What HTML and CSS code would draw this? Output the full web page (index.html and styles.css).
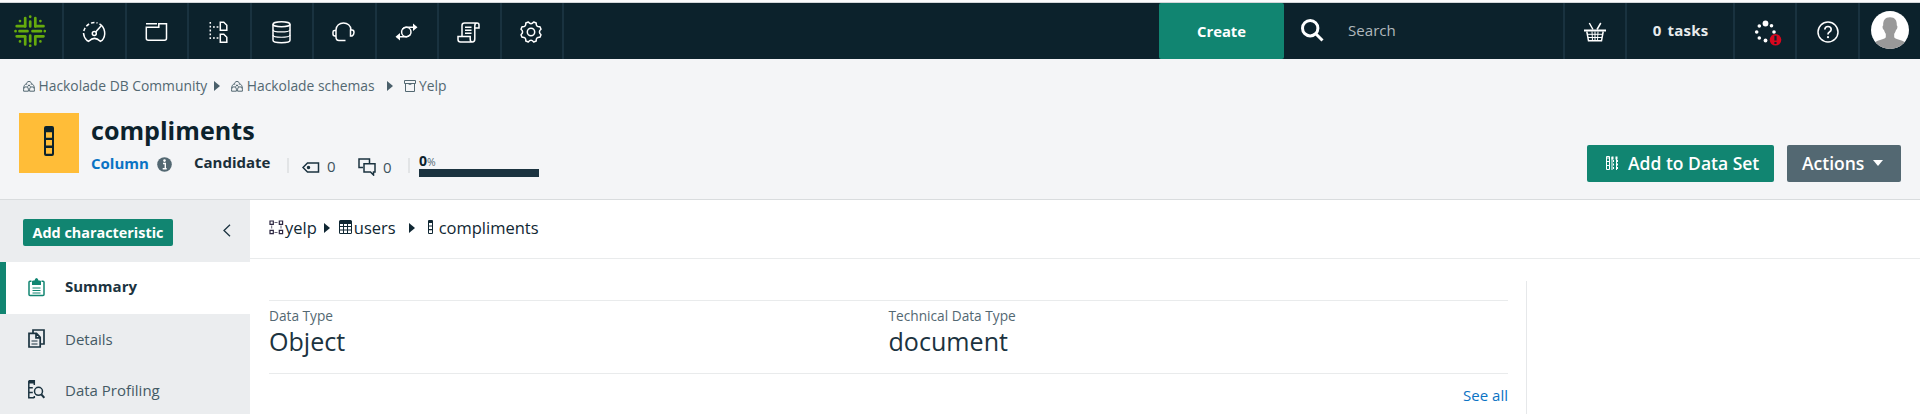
FILE: index.html
```html
<!DOCTYPE html>
<html lang="en">
<head>
<meta charset="utf-8">
<title>compliments</title>
<link rel="stylesheet" href="styles.css">
</head>
<body>
<svg width="0" height="0" class="defs">
  <defs>
    <symbol id="community" viewBox="0 0 12 12"><g fill="none" stroke="currentColor"><path d="M3.800 4.800A2.400 2.400 0 1 1 8.200 4.800M3.500 3.300Q.5 5 .5 8.500M8.500 3.300Q11.500 5 11.500 8.500"/><path d="M.6 9.200a2.400 2.400 0 0 1 4.800 0v2H.6zM6.600 9.200a2.400 2.400 0 0 1 4.800 0v2H6.600zM4.500 6.800L6 4.800l1.500 2"/></g></symbol>
    <symbol id="column" viewBox="0 0 10 30"><path d="M2 0h6a2 2 0 0 1 2 2v26a2 2 0 0 1-2 2H2a2 2 0 0 1-2-2V2a2 2 0 0 1 2-2zM2 6.300v5.500h6V6.300zM2 14v5.500h6V14zM2 22v5.700h6V22z" fill="currentColor" fill-rule="evenodd"/></symbol>
  </defs>
</svg>

<header class="topbar">
  <a class="cell logo">
    <svg width="32" height="32" viewBox="0 0 32 32" fill="none" stroke="#65ab0d" stroke-width="2.700" stroke-linecap="round">
      <path d="M11.200 3v5M16.200 6.500v5M21.300 3v5M11.200 8v3.500M21.300 8v3.500M11.200 21.500v8M16.200 20.500v6M21.300 21.500v8"/>
      <path d="M2.700 11.200H11M21.500 11.200h8M5.500 16.200h8M18.500 16.200h8.500M2.700 21.300H11M21.500 21.300h8"/>
      <path d="M16.200 1.500v.3M16.200 30.500v.3M1.500 16.200h.1M30.800 16.200h.1M6 6v.1M26.400 6v.1M6 26.400v.1M26.400 26.400v.1"/>
    </svg>
  </a>
  <a class="cell gauge"><svg width="25" height="22" viewBox="0 0 25 22" fill="none" stroke="#fff" stroke-width="1.500">
    <path d="M17.500 2.900A11 11 0 0 1 20 19.500L18.300 20.300Q12.500 14.500 6.700 20.300L5 19.500A11 11 0 0 1 1.500 12"/><path d="M1.800 10A11 11 0 0 1 15.500 2" stroke-dasharray="3.500 2"/><circle cx="12.300" cy="12.500" r="2"/><path d="M13.700 11L19 5"/></svg></a>
  <a class="cell"><svg width="23" height="20" viewBox="0 0 23 20" fill="none" stroke="#fff" stroke-width="1.500">
    <path d="M1 1.800h11M1.300 5.200h12.500V1.800h7.700v14.500a2 2 0 0 1-2 2H3.300a2 2 0 0 1-2-2z"/></svg></a>
  <a class="cell"><svg width="19" height="23" viewBox="0 0 19 23" fill="none" stroke="#fff" stroke-width="1.500">
    <path d="M1.300 1v17" stroke-dasharray="1.800 2"/><path d="M4 6h6M4 17h6" stroke-dasharray="1.800 1.800"/><path d="M11.300 1.300h3.500l3 3v5h-6.500zM11.300 13.300h3.500l3 3v5h-6.500z"/></svg></a>
  <a class="cell"><svg width="19" height="23" viewBox="0 0 19 23" fill="none" stroke="#fff" stroke-width="1.500">
    <ellipse cx="9.500" cy="3.300" rx="8.500" ry="2.500"/><path d="M1 3.300v16c0 3.300 17 3.300 17 0v-16"/><path d="M1 8.700c0 3 17 3 17 0M1 14c0 3 17 3 17 0" stroke-width="1.200"/></svg></a>
  <a class="cell"><svg width="23" height="20" viewBox="0 0 23 20" fill="none" stroke="#fff" stroke-width="1.500">
    <path d="M4 8C4 -1.300 19 -1.300 19 8M4 7.500v7.500q0 3.500 3 3.500h6.500M4 8.500H2.500Q1 8.500 1 10v2q0 2 2 2h1M18.500 8h1.500q2 0 2 2.500t-2 3.500h-1.500z"/></svg></a>
  <a class="cell"><svg width="23" height="18" viewBox="0 0 23 18" fill="none" stroke="#fff" stroke-width="1.500">
    <circle cx="11.300" cy="9" r="4.700"/><path d="M7.500 6.200Q9 4.300 11 4.300H18M15.200 11.800Q13.500 13.700 11.500 13.700H5"/><path d="M18 .5l4.500 3.800L18 8zM5 10L.5 13.700 5 17.500z" fill="#fff" stroke="none"/></svg></a>
  <a class="cell"><svg width="23" height="21" viewBox="0 0 23 21" fill="none" stroke="#fff" stroke-width="1.500">
    <path d="M5 14V3.500Q5 1 7.500 1h12.500Q22 1 22 3v3h-4M20 1Q17.800 1 17.800 4v13q0 3-2.500 3H3.500Q1 20 1 17.500v-3h12.200V17q0 3 2 3M8 5.200h6.500M8 8.200h6.500M8 11.200h6.500"/></svg></a>
  <a class="cell"><svg width="22" height="22" viewBox="0 0 22 22" fill="none" stroke="#fff" stroke-width="1.500" stroke-linejoin="round">
    <circle cx="11" cy="11" r="3.700"/><path d="M8.300 1Q11 4.500 13.700 1L16.200 2Q15.800 6.200 20 5.800L21 8.300Q17.800 11 21 13.700L20 16.200Q15.800 15.800 16.200 20L13.700 21Q11 17.500 8.300 21L5.800 20Q6.200 15.800 2 16.200L1 13.700Q4.200 11 1 8.300L2 5.800Q6.200 6.200 5.800 2z"/></svg></a>
  <div class="spring"></div>
  <button class="create">Create</button>
  <div class="search"><svg width="23" height="23" viewBox="0 0 23 23" fill="none" stroke="#fff" stroke-width="3"><circle cx="9.200" cy="9.200" r="7.700"/><path d="M15 15l6.500 6.500"/></svg><span>Search</span></div>
  <a class="cell basket"><svg width="22" height="20" viewBox="0 0 22 20" fill="none" stroke="#fff" stroke-width="1.500"><path d="M0 8.500h22" stroke-width="2"/><path d="M5.300 1L9 7.500M16.800 1L13 7.500M2.800 9.500L4.500 18.800h13L19.200 9.500"/><path d="M8 9.500l.5 9M11 9.500v9M14 9.500l-.5 9M3.500 12.300h15M4 15.500h14" stroke-width="1"/></svg></a>
  <a class="cell tasks">0 tasks</a>
  <a class="cell spinner"><svg width="28" height="26" viewBox="0 0 28 26"><g fill="#fff"><circle cx="11.500" cy="3.500" r="2.900"/><circle cx="17.500" cy="5.800" r="1.800"/><circle cx="20" cy="12" r="1.800"/><circle cx="11.500" cy="20.500" r="1.900"/><circle cx="5.300" cy="18" r="1.800"/><circle cx="2.700" cy="12" r="1.800"/><circle cx="5.300" cy="6" r="1.800"/></g><circle cx="21.500" cy="19.800" r="5.800" fill="#d9071e"/><path d="M21.500 15.800v4.800M21.500 22v2" stroke="#0c222c" stroke-width="2.200"/></svg></a>
  <a class="cell help"><svg width="22" height="22" viewBox="0 0 22 22" fill="none" stroke="#fff" stroke-width="1.500"><circle cx="11" cy="11" r="10"/><path d="M7.800 8.500Q8 5.500 11 5.500t3.200 2.800Q14.200 10 12.500 11T11 13.500" stroke-width="1.700"/><circle cx="11" cy="16.200" r="1.100" fill="#fff" stroke="none"/></svg></a>
  <svg class="avatar" width="38" height="38" viewBox="0 0 38 38"><clipPath id="round"><circle cx="19" cy="19" r="19"/></clipPath><circle cx="19" cy="19" r="19" fill="#fff"/><path clip-path="url(#round)" d="M19 6.300c5 0 7 3 6.800 8.200 1 0 .8 3.500-.8 4.500-.5 2-1.200 3-1.800 3.800v3.500C25 29 31 28.500 34 31.500V38H4v-6.500c3-3 9-2.500 10.800-5.200v-3.500c-.6-.8-1.300-1.800-1.800-3.800-1.600-1-1.800-4.500-.8-4.500C12 9.300 14 6.300 19 6.300z" fill="#999"/></svg>
</header>

<section class="asset">
  <nav class="crumbs">
    <svg width="12" height="12"><use href="#community"/></svg><span>Hackolade DB Community</span>
    <i class="arrow"></i>
    <svg width="12" height="12"><use href="#community"/></svg><span>Hackolade schemas</span>
    <i class="arrow wide"></i>
    <svg width="12" height="12" viewBox="0 0 12 12" fill="none" stroke="currentColor"><path d="M.5.500h11v3H.5zM1.500 3.500v8h9v-8M4 3.500q2 2 4 0"/></svg><span>Yelp</span>
  </nav>
  <div class="asset-row">
    <div class="tile"><svg width="10" height="30"><use href="#column"/></svg></div>
    <div class="info">
      <h1>compliments</h1>
      <div class="meta">
        <a class="type">Column</a>
        <svg class="about" width="15" height="15" viewBox="0 0 15 15"><circle cx="7.500" cy="7.500" r="7.300" fill="#536872"/><path d="M6 6.500h2.300v5M5.700 11.700h4" stroke="#fff" stroke-width="1.400" fill="none"/><circle cx="7.500" cy="3.600" r="1.300" fill="#fff"/></svg>
        <b class="status">Candidate</b>
        <i class="rule"></i>
        <svg class="tag" width="18" height="11" viewBox="0 0 18 11" fill="none" stroke="#1b3340" stroke-width="1.500"><path d="M1 5.500L5.500 1H16.500v9H5.500z"/><circle cx="6.500" cy="5.500" r="1" fill="#1b3340"/></svg>
        <span class="count">0</span>
        <svg class="chat" width="18" height="18" viewBox="0 0 18 18" fill="none" stroke="#1b3340" stroke-width="1.500"><path d="M5 9.500H1V1h10.500v4M6 5.700h11V14h-1.500v3l-3-3H6z"/></svg>
        <span class="count low">0</span>
        <i class="rule second"></i>
        <div class="progress"><div class="pct"><b>0</b>%</div><div class="track"></div></div>
      </div>
    </div>
    <div class="buttons">
      <button class="btn green"><svg width="12" height="14" viewBox="0 0 12 14" fill="none" stroke="#fff"><path d="M.5.500h3v13h-3zM.5 5.500h3M.5 9.500h3M1 2h2.500M6 1v13M10.500 1v13" /><path d="M5.500 2h2M9.500 2h2" stroke-width="3"/><path d="M7.500 4v10M11.500 4v10" stroke-dasharray="2 1.500"/></svg>Add to Data Set</button>
      <button class="btn gray">Actions<i class="caret"></i></button>
    </div>
  </div>
</section>

<div class="body">
  <aside>
    <div class="side-head">
      <button class="add">Add characteristic</button>
      <svg width="8" height="13" viewBox="0 0 8 13" fill="none" stroke="#1b3340" stroke-width="1.300"><path d="M7 .7L1 6.500l6 5.800"/></svg>
    </div>
    <a class="item active"><svg width="17" height="19" viewBox="0 0 17 19" fill="none" stroke="#118571" stroke-width="1.500"><path d="M3.500 3.300H2Q1 3.300 1 4.300v12.200q0 1 1 1h13q1 0 1-1V4.300q0-1-1-1h-1.500"/><path d="M4.500 10h8M4.500 12.500h8M4.500 15h8" stroke-width="1"/><path d="M4 7V3.500q0-1 1.500-1h1q.5-2.500 2-2.500t2 2.500h1Q13 2.500 13 3.500V7z" fill="#118571" stroke="none"/></svg><span>Summary</span></a>
    <a class="item"><svg width="17" height="19" viewBox="0 0 17 19" fill="none" stroke="#1b3340" stroke-width="1.700"><path d="M1 4.300h7.500l3.700 4V18H1zM8 4.500v4.300h4M5 4V1h11v14h-3.500"/><path d="M3.500 12h6M3.500 15h6" stroke-width="1"/></svg><span>Details</span></a>
    <a class="item last"><svg width="17" height="19" viewBox="0 0 17 19" fill="none" stroke="#1b3340" stroke-width="1.500"><path d="M.8.800h5.500V5M.8.800v17h5.500M.8 7.800h4M.8 12.500h4M6.300 16v2"/><path d="M1 2h5" stroke-width="3"/><circle cx="10.500" cy="11.300" r="4"/><path d="M13.300 14.300l3 3.500" stroke-width="2"/></svg><span>Data Profiling</span></a>
  </aside>
  <main>
    <nav class="path">
      <svg width="15" height="15" viewBox="0 0 15 15" fill="none" stroke="#2b2540" stroke-width="1.200"><path d="M1 1h3.300v3.300H1zM10.300 1h3.300v3.300h-3.300zM1 10.300h3.300v3.300H1zM10.300 10.300h3.300v3.300h-3.300z"/><path d="M5.500 2.500h4M5.500 12.500h4M2.700 5.500v4M12 5.500v4" stroke-width="1" stroke-dasharray="3 1" opacity=".7"/></svg><span class="root">yelp</span>
      <i class="arrow first"></i>
      <svg width="13" height="14" viewBox="0 0 13 14"><path d="M1.500 0h10Q13 0 13 1.500v11q0 1.500-1.500 1.500h-10Q0 14 0 12.500v-11Q0 0 1.500 0zM1 4v2h3V4zm4 0v2h3V4zm4 0v2h3V4zM1 7v2.500h3V7zm4 0v2.500h3V7zm4 0v2.500h3V7zM1 10.500V13h3v-2.500zm4 0V13h3v-2.500zm4 0V13h3v-2.500z" fill-rule="evenodd" fill="#102733"/></svg><span class="users">users</span>
      <i class="arrow second"></i>
      <svg width="5" height="14" viewBox="0 0 10 30" preserveAspectRatio="none" color="#102733"><use href="#column"/></svg><span class="leaf">compliments</span>
    </nav>
    <div class="panes">
      <div class="left">
        <div class="facts">
          <div><label>Data Type</label><p>Object</p></div>
          <div><label>Technical Data Type</label><p>document</p></div>
        </div>
        <a class="all">See all</a>
      </div>
      <div class="right"></div>
    </div>
  </main>
</div>
</body>
</html>
```
FILE: styles.css
```css
* { box-sizing: border-box; }
body { margin: 0; height: 414px; overflow: hidden; background: #fff; color: #102733; font-family: "Open Sans", "Noto Sans", sans-serif; display: flex; flex-direction: column; }
button { border: 0; margin: 0; padding: 0; font-family: inherit; color: #fff; }
svg { display: block; flex: none; }
.defs { position: absolute; }
h1, p { margin: 0; font-weight: 400; }

.topbar { flex: none; height: 59px; border-top: 2px solid #fbfbfc; background: #0c222c; box-shadow: inset 0 1px #d3d6d9; display: flex; align-items: center; padding: 1px 11px 0 1.500px; }
.cell { flex: none; width: 62.500px; height: 56px; border-right: 2px solid #19323f; display: flex; align-items: center; justify-content: center; padding: 2px 1px 0 0; }
.logo { padding: 0 4px 1px 0; }
.gauge { padding-right: 0; }
.spring { flex: 1; }
.create { width: 125px; height: 56px; background: #118571; border-radius: 2px; font-size: 14.800px; font-weight: 700; line-height: 56px; }
.search { width: 279px; height: 56px; display: flex; align-items: center; padding: 0 0 2px 17px; gap: 24px; color: #b0b8bc; font-size: 15.100px; }
.basket { width: 64px; border-left: 2px solid #19323f; padding-right: 0; }
.tasks { width: 108px; color: #e8ebec; font-size: 15px; font-weight: 700; letter-spacing: .2px; word-spacing: 2px; padding: 0 0 2px 1px; }
.spinner { width: 62px; padding: 4px 0 0 5px; }
.help { width: 63px; padding-right: 0; }
.avatar { margin-left: 11px; margin-top: -2px; }

.asset { flex: none; height: 141px; background: #f4f5f7; border-bottom: 1px solid #d9dcde; padding: 17px 19px 0; }
.crumbs { height: 20px; display: flex; align-items: center; padding-left: 4px; font-size: 13.850px; line-height: 20px; color: #536872; white-space: nowrap; }
.crumbs svg { margin-top: -1px; margin-right: 3.500px; }
.arrow { border: 5px solid transparent; border-left: 6px solid #4a606b; border-right: 0; margin: 0 11px 0 7px; }
.arrow.wide { margin: 0 11px 0 12px; }
.asset-row { display: flex; margin-top: 17px; }
.tile { width: 60px; height: 60px; background: #ffbd38; color: #0c222c; display: flex; align-items: center; justify-content: center; padding-bottom: 4px; }
.info { margin: 1px 0 0 12px; flex: 1; }
h1 { font-size: 25.100px; line-height: 32px; font-weight: 700; color: #0c222c; }
.meta { display: flex; align-items: flex-start; line-height: 20px; font-size: 15px; margin-top: 6px; }
.type { color: #0a73c4; font-weight: 700; width: 66px; margin-top: 1px; }
.about { margin: 5px 22px 0 0; }
.status { width: 93px; font-weight: 700; font-size: 15px; color: #1b2f3a; }
.rule { width: 2px; height: 15px; background: #e2e4e6; margin-top: 6px; }
.tag { margin: 10px 7px 0 13px; }
.count { margin-top: 4px; width: 31px; color: #3c535e; }
.chat { margin: 6px 7px 0 0; }
.count.low { margin-top: 5px; width: 25px; }
.rule.second { margin-right: 9px; }
.progress { width: 120px; }
.pct { font-size: 10.500px; line-height: 17px; height: 17px; color: #536872; }
.pct b { font-size: 14px; color: #0c222c; }
.track { height: 8px; background: #1b3340; }
.buttons { display: flex; gap: 13px; padding-top: 32px; }
.btn { height: 37px; border-radius: 2px; display: flex; align-items: center; font-size: 17.500px; font-weight: 600; white-space: nowrap; padding-bottom: 1px; }
.green { width: 187px; background: #118571; padding-left: 19px; gap: 10px; }
.gray { width: 114px; background: #536872; padding-left: 15px; gap: 9px; }
.caret { border: 5px solid transparent; border-top: 6px solid #fff; border-bottom: 0; }

.body { flex: 1; display: flex; min-height: 0; }
aside { width: 250px; background: #ebedef; }
.side-head { height: 62px; padding: 19px 19px 0 23px; display: flex; justify-content: space-between; align-items: flex-start; }
.side-head svg { margin-top: 5px; }
.add { width: 150px; height: 27px; background: #118571; border-radius: 2px; font-size: 14.400px; font-weight: 700; line-height: 26px; }
.item { height: 52px; display: flex; align-items: center; gap: 20px; padding: 0 0 0 28px; font-size: 15px; color: #445a65; }
.item span { margin-bottom: 2px; }
.item svg { margin-bottom: 3px; }
.active { background: #fff; border-left: 6px solid #118571; padding-left: 22px; font-weight: 700; color: #1b3340; padding-bottom: 2px; }
.active svg { margin: 0; }
.last { height: 50px; }
main { flex: 1; display: flex; flex-direction: column; }
.path { height: 59px; border-bottom: 1px solid #e9ebec; padding: 0 0 3px 19px; display: flex; align-items: center; font-size: 16.500px; line-height: 22px; color: #102733; }
.path svg { margin-top: -1px; }
.path .first { margin: 0 9px 0 7px; border-left-color: #102733; }
.path .second { margin: 0 13px; border-left-color: #102733; }
.root { margin-left: 1px; }
.users { margin-left: 2px; }
.leaf { margin-left: 6px; }
.panes { flex: 1; display: flex; padding: 22px 0 0 19px; }
.left { width: 1239px; padding-top: 19px; }
.right { flex: 1; margin-left: 18px; border-left: 1px solid #e6e8ea; }
.facts { height: 74px; border: solid #e9ebec; border-width: 1px 0; display: grid; grid-template-columns: 1fr 1fr; padding-top: 5px; }
.facts label { display: block; font-size: 13.700px; line-height: 20px; color: #536872; }
.facts p { font-size: 25.100px; line-height: 30px; color: #1b3340; }
.all { display: block; text-align: right; font-size: 15px; line-height: 22px; margin-top: 10px; color: #0a73c4; }
```
